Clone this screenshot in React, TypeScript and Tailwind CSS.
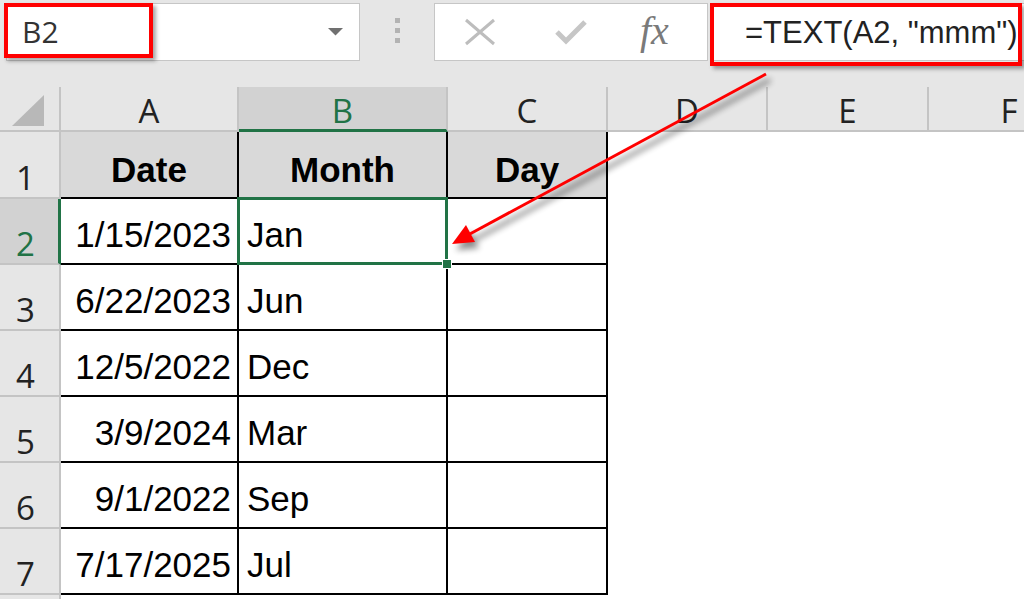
import React from "react";

const COLUMNS = [
  { id: "A", w: 178 },
  { id: "B", w: 209 },
  { id: "C", w: 160 },
  { id: "D", w: 160 },
  { id: "E", w: 161 },
  { id: "F", w: 162 },
];

const ROWS = [
  { date: "1/15/2023", month: "Jan" },
  { date: "6/22/2023", month: "Jun" },
  { date: "12/5/2022", month: "Dec" },
  { date: "3/9/2024", month: "Mar" },
  { date: "9/1/2022", month: "Sep" },
  { date: "7/17/2025", month: "Jul" },
];

const headFont = { fontFamily: '"Open Sans", "Noto Sans", sans-serif' };
const cellFont = { fontFamily: '"Liberation Sans", Arial, sans-serif' };

const FormulaBar = () => {
  return (
    <div className="flex h-[87px] bg-[#e6e6e6] pt-[3px]">
      {/* name box */}
      <div className="relative ml-[6px] flex h-[58px] w-[354px] shrink-0 items-center justify-between border border-[#c6c6c6] bg-white pl-[15px] pr-[16px]">
        <span className="text-[30px] leading-none text-[#333]" style={headFont}>
          B2
        </span>
        <svg width="15" height="8" viewBox="0 0 15 8">
          <polygon points="0,0 15,0 7.5,7.5" fill="#707070" />
        </svg>
        <div className="absolute -left-[3px] -top-[1px] h-[55px] w-[149px] border-[4px] border-[#ff0000] shadow-[3px_3px_4px_rgba(0,0,0,0.35)]" />
      </div>

      {/* splitter dots */}
      <div className="ml-[35px] flex shrink-0 flex-col gap-[5px] pt-[15px]">
        <span className="block h-[5px] w-[5px] bg-[#b3b3b3]" />
        <span className="block h-[5px] w-[5px] bg-[#b3b3b3]" />
        <span className="block h-[5px] w-[5px] bg-[#b3b3b3]" />
      </div>

      {/* cancel / enter / fx */}
      <div className="ml-[34px] flex h-[58px] w-[274px] shrink-0 items-center border border-[#c6c6c6] bg-white">
        <svg width="32" height="28" viewBox="0 0 32 28" className="ml-[29px]">
          <path d="M2 2 L30 26 M30 2 L2 26" stroke="#bdbdbd" strokeWidth="3" fill="none" />
        </svg>
        <svg width="34" height="26" viewBox="0 0 34 26" className="ml-[58px]">
          <path d="M3 13 L12 22 L31 3" stroke="#c6c6c6" strokeWidth="5" fill="none" />
        </svg>
        <span
          className="ml-[52px] pb-[2px] text-[40px] italic leading-none text-[#7a7a7a]"
          style={{ fontFamily: '"Liberation Serif", "Times New Roman", serif' }}
        >
          fx
        </span>
      </div>

      {/* formula input */}
      <div className="relative ml-[3px] flex h-[58px] flex-1 items-center border border-r-0 border-[#c6c6c6] bg-white pl-[33px]">
        <span className="whitespace-nowrap text-[31px] leading-none text-[#222]" style={cellFont}>
          =TEXT(A2, "mmm")
        </span>
        <div className="absolute -left-[2px] -top-[1px] h-[63px] w-[312px] border-[4px] border-[#ff0000] shadow-[3px_3px_4px_rgba(0,0,0,0.35)]" />
      </div>
    </div>
  );
};

const ColumnHeaders = () => {
  return (
    <div className="flex h-[45px] bg-[#e6e6e6]">
      <div className="flex w-[61px] shrink-0 items-end justify-center border-b-2 border-r-2 border-[#c4c4c4] pb-[4px] pr-[4px]">
        <svg width="32" height="31" viewBox="0 0 32 31">
          <polygon points="32,0 32,31 0,31" fill="#b8b8b8" />
        </svg>
      </div>
      {COLUMNS.map((c) => (
        <div
          key={c.id}
          className={
            c.id === "B"
              ? "flex shrink-0 items-end justify-center border-b-[3px] border-r-2 border-b-[#217346] border-r-[#c4c4c4] bg-[#d2d2d2] pb-[2px] text-[33px] leading-none text-[#217346]"
              : "flex shrink-0 items-end justify-center border-b-2 border-r-2 border-[#c4c4c4] pb-[3px] text-[33px] leading-none text-[#222]"
          }
          style={{ ...headFont, width: c.w }}
        >
          {c.id}
        </div>
      ))}
    </div>
  );
};

const RowHeader = ({ n, active }: { n: number; active?: boolean }) => (
  <div
    className={
      active
        ? "flex w-[61px] shrink-0 items-end justify-center border-b-2 border-r-[3px] border-b-[#c4c4c4] border-r-[#217346] bg-[#d2d2d2] pb-[3px] pr-[7px] text-[33px] leading-none text-[#217346]"
        : "flex w-[61px] shrink-0 items-end justify-center border-b-2 border-r-2 border-[#c4c4c4] bg-[#e6e6e6] pb-[3px] pr-[8px] text-[33px] leading-none text-[#222]"
    }
    style={headFont}
  >
    {n}
  </div>
);

const Sheet = () => {
  return (
    <div className="bg-white">
      {/* row 1: table headings */}
      <div className="flex h-[67px]">
        <RowHeader n={1} />
        {["Date", "Month", "Day"].map((t, i) => (
          <div
            key={t}
            className="flex shrink-0 items-end justify-center border-b-2 border-r-2 border-black bg-[#d9d9d9] pb-[10px] text-[35px] font-bold leading-none text-black"
            style={{ ...cellFont, width: COLUMNS[i].w }}
          >
            {t}
          </div>
        ))}
      </div>

      {ROWS.map((r, i) => (
        <div key={r.date} className="flex h-[66px]">
          <RowHeader n={i + 2} active={i === 0} />
          <div
            className="flex w-[178px] shrink-0 items-end justify-end border-b-2 border-r-2 border-black pb-[11px] pr-[6px] text-[35px] leading-none text-black"
            style={cellFont}
          >
            {r.date}
          </div>
          <div
            className="relative flex w-[209px] shrink-0 items-end border-b-2 border-r-2 border-black pb-[11px] pl-[8px] text-[35px] leading-none text-black"
            style={cellFont}
          >
            {r.month}
            {i === 0 && (
              <>
                <div className="absolute -bottom-[2px] -left-[2px] -right-[2px] -top-[2px] z-10 border-[3px] border-[#217346]" />
                <div className="absolute -bottom-[6px] -right-[6px] z-10 h-[10px] w-[10px] border border-white bg-[#217346]" />
              </>
            )}
          </div>
          <div className="w-[160px] shrink-0 border-b-2 border-r-2 border-black" />
        </div>
      ))}

      {/* row 8, cut off by the window */}
      <div className="flex h-[20px]">
        <div className="w-[61px] shrink-0 border-r-2 border-[#c4c4c4] bg-[#e6e6e6]" />
      </div>
    </div>
  );
};

export default function App() {
  return (
    <div className="relative h-[599px] w-[1024px] overflow-hidden bg-white">
      <FormulaBar />
      <ColumnHeaders />
      <Sheet />

      {/* callout arrow from the formula to the selected cell */}
      <svg className="pointer-events-none absolute left-0 top-0 z-20" width="1024" height="599" viewBox="0 0 1024 599">
        <defs>
          <filter id="arrowShadow" x="-20%" y="-20%" width="140%" height="140%">
            <feGaussianBlur stdDeviation="3" />
          </filter>
        </defs>
        <g transform="translate(4 6)" opacity="0.45" filter="url(#arrowShadow)">
          <line x1="766" y1="74" x2="468" y2="235" stroke="#000" strokeWidth="4" />
          <polygon points="452,244 466,225 475,242" fill="#000" />
        </g>
        <line x1="766" y1="74" x2="468" y2="235" stroke="#ff0000" strokeWidth="3" />
        <polygon points="452,244 466,225 475,242" fill="#ff0000" />
      </svg>
    </div>
  );
}
